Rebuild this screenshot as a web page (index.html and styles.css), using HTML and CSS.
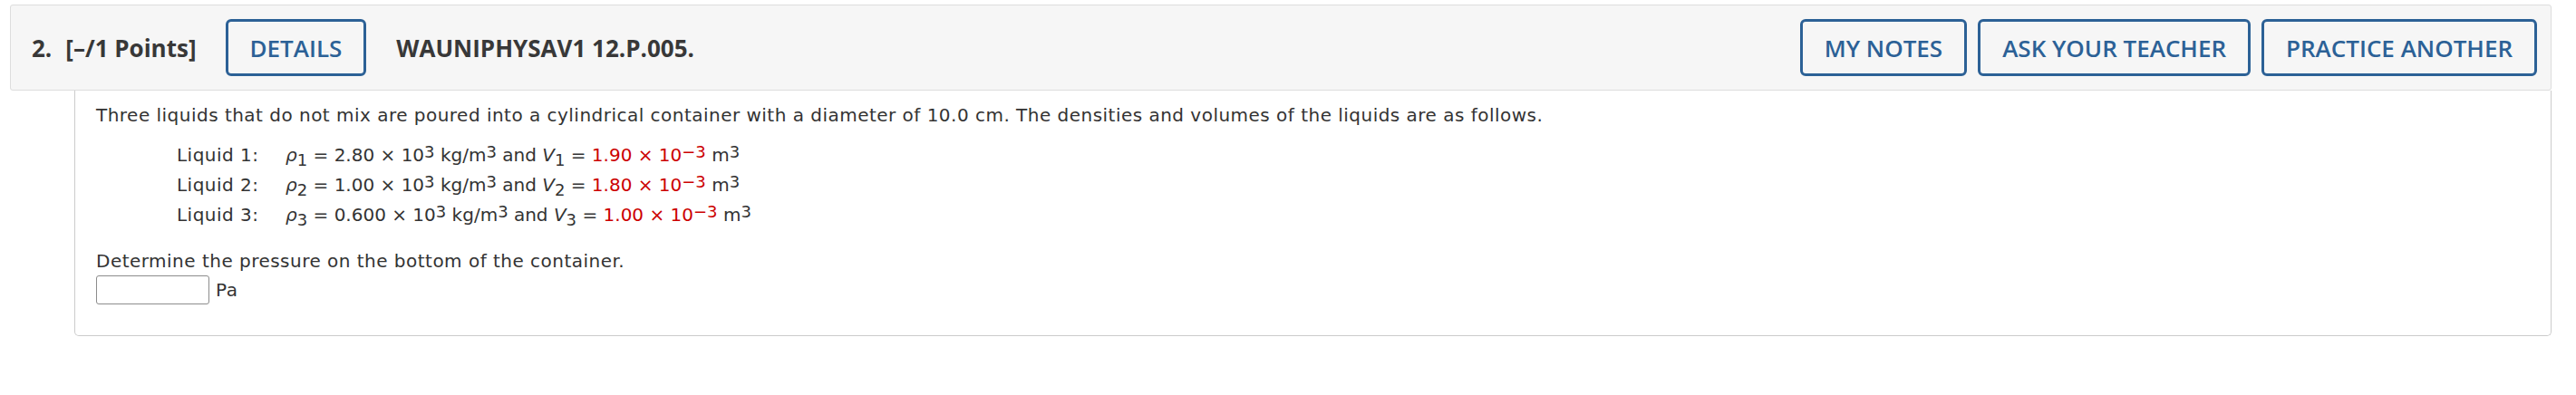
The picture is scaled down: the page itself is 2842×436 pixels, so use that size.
FILE: index.html
```html
<!DOCTYPE html>
<html>
<head>
<meta charset="utf-8">
<link rel="stylesheet" href="styles.css">
</head>
<body>
<div class="question">
  <div class="q-header">
    <div class="q-title">
      <span class="q-num">2.</span>
      <span class="q-points">[–/1 Points]</span>
    </div>
    <button class="btn">DETAILS</button>
    <div class="q-code">WAUNIPHYSAV1 12.P.005.</div>
    <div class="q-actions">
      <button class="btn">MY NOTES</button>
      <button class="btn">ASK YOUR TEACHER</button>
      <button class="btn">PRACTICE ANOTHER</button>
    </div>
  </div>
  <div class="q-body">
    <p class="intro">Three liquids that do not mix are poured into a cylindrical container with a diameter of 10.0 cm. The densities and volumes of the liquids are as follows.</p>
    <div class="liquids">
      <div class="lbl">Liquid 1:</div>
      <div class="eq"><i>ρ</i><sub>1</sub> = 2.80 × 10<sup>3</sup> kg/m<sup>3</sup> and <i>V</i><sub>1</sub> = <span class="red">1.90 × 10<sup>−3</sup></span> m<sup>3</sup></div>
      <div class="lbl">Liquid 2:</div>
      <div class="eq"><i>ρ</i><sub>2</sub> = 1.00 × 10<sup>3</sup> kg/m<sup>3</sup> and <i>V</i><sub>2</sub> = <span class="red">1.80 × 10<sup>−3</sup></span> m<sup>3</sup></div>
      <div class="lbl">Liquid 3:</div>
      <div class="eq"><i>ρ</i><sub>3</sub> = 0.600 × 10<sup>3</sup> kg/m<sup>3</sup> and <i>V</i><sub>3</sub> = <span class="red">1.00 × 10<sup>−3</sup></span> m<sup>3</sup></div>
    </div>
    <p class="ask">Determine the pressure on the bottom of the container.</p>
    <div class="answer">
      <input class="ans-box" type="text">
      <span class="unit">Pa</span>
    </div>
  </div>
</div>
</body>
</html>
```

FILE: styles.css
```css
html, body {
  margin: 0;
  padding: 0;
  background: #ffffff;
}

.question {
  margin: 5px 27px 0 11px;
}

.q-header {
  display: flex;
  align-items: center;
  height: 93px;
  padding: 0 15px 0 23px;
  background: #f6f6f6;
  border: 1px solid #dddddd;
  border-radius: 3px;
  font-family: "Open Sans", "Liberation Sans", sans-serif;
  font-size: 26px;
  color: #383838;
}

.q-title {
  display: flex;
  align-items: baseline;
  font-weight: 700;
}

.q-points {
  margin-left: 15px;
}

.btn {
  display: flex;
  align-items: center;
  height: 63px;
  padding: 0 24px;
  margin: 0;
  background: transparent;
  border: 3px solid #2c6196;
  border-radius: 6px;
  font-family: "Open Sans", "Liberation Sans", sans-serif;
  font-size: 26px;
  font-weight: 600;
  color: #2c6196;
}

.q-title + .btn {
  margin-left: 32px;
}

.q-code {
  margin-left: 33px;
  font-weight: 700;
}

.q-actions {
  display: flex;
  gap: 12px;
  margin-left: auto;
}

.q-body {
  margin-left: 71px;
  padding: 14px 23px 34px 23px;
  border: 1px solid #cccccc;
  border-top: none;
  border-radius: 0 0 5px 5px;
  font-family: Verdana, "DejaVu Sans", sans-serif;
  font-size: 20px;
  color: #333333;
}

.intro,
.ask,
.lbl,
.unit {
  letter-spacing: 0.48px;
}

.intro {
  margin: 0;
  line-height: 26px;
}

.liquids {
  display: grid;
  grid-template-columns: 120px auto;
  margin: 15px 0 0 89px;
  line-height: 33px;
}

.eq i {
  font-style: italic;
}

.eq sub {
  font-size: 0.9em;
  line-height: 0;
  vertical-align: -5px;
}

.eq sup {
  font-size: 0.9em;
  line-height: 0;
  vertical-align: 4px;
}

.red {
  color: #cc0000;
}

.ask {
  margin: 21px 0 0 0;
  line-height: 26px;
}

.answer {
  display: flex;
  align-items: center;
  gap: 7px;
  margin-top: 3px;
  line-height: 26px;
}

.ans-box {
  box-sizing: border-box;
  width: 125px;
  height: 32px;
  margin: 0;
  padding: 0 6px;
  border: 1px solid #8c8c8c;
  border-radius: 3px;
  background: #ffffff;
  font-family: Verdana, "DejaVu Sans", sans-serif;
  font-size: 20px;
}
```
